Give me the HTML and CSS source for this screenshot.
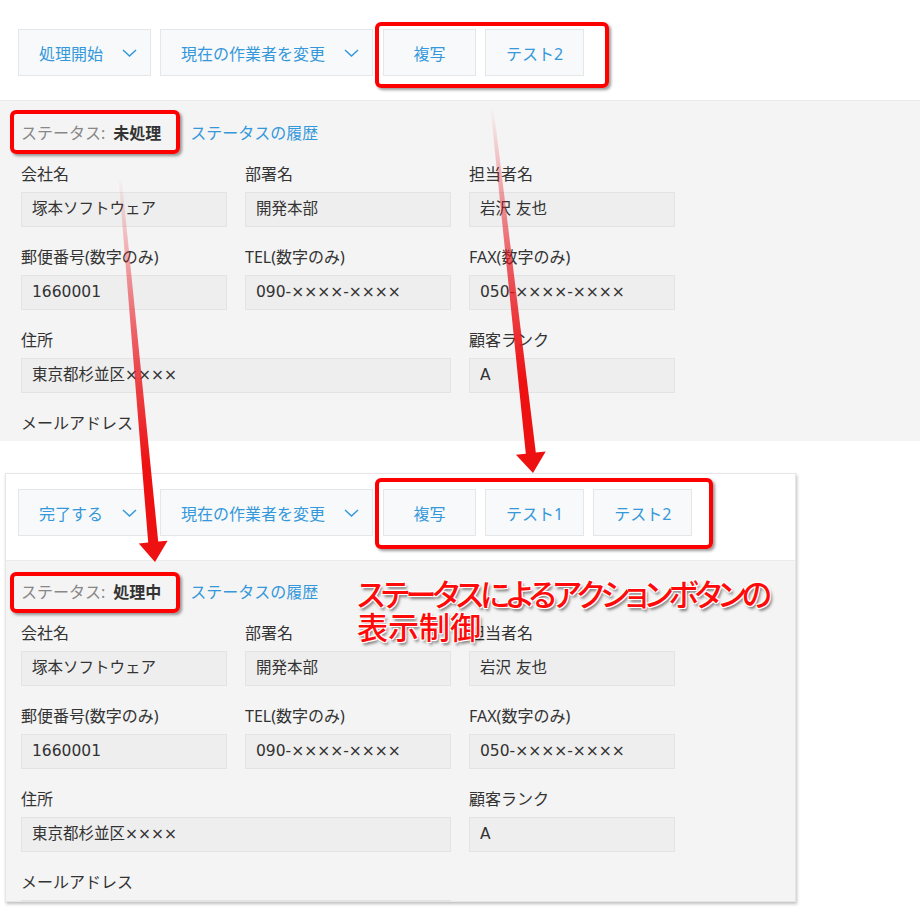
FILE: index.html
```html
<!DOCTYPE html>
<html lang="ja">
<head>
    <meta charset="UTF-8">
    <title>ステータスによるアクションボタンの表示制御</title>
    <link rel="stylesheet" href="styles.css">
</head>
<body>
    <div class="shot">
        <!-- 未処理のレコード -->
        <section class="record record-full">
            <div class="toolbar">
                <button class="btn btn-menu">処理開始 <svg class="chev" viewBox="0 0 15 8"><polyline points="1,1 7.5,7 14,1"/></svg></button>
                <button class="btn btn-menu">現在の作業者を変更 <svg class="chev" viewBox="0 0 15 8"><polyline points="1,1 7.5,7 14,1"/></svg></button>
                <button class="btn btn-action btn-first">複写</button>
                <button class="btn btn-action">テスト2</button>
            </div>
            <div class="detail">
                <div class="status-row">
                    <span class="status-label">ステータス:</span>
                    <span class="status-value">未処理</span>
                    <a class="status-link">ステータスの履歴</a>
                </div>
                <div class="fields">
                    <div class="field"><div class="label">会社名</div><div class="value">塚本ソフトウェア</div></div>
                    <div class="field"><div class="label">部署名</div><div class="value">開発本部</div></div>
                    <div class="field"><div class="label">担当者名</div><div class="value">岩沢 友也</div></div>
                    <div class="field"><div class="label">郵便番号(数字のみ)</div><div class="value">1660001</div></div>
                    <div class="field"><div class="label">TEL(数字のみ)</div><div class="value">090-××××-××××</div></div>
                    <div class="field"><div class="label">FAX(数字のみ)</div><div class="value">050-××××-××××</div></div>
                    <div class="field wide"><div class="label">住所</div><div class="value">東京都杉並区××××</div></div>
                    <div class="field"><div class="label">顧客ランク</div><div class="value">A</div></div>
                    <div class="field wide"><div class="label">メールアドレス</div><div class="value"></div></div>
                </div>
            </div>
        </section>

        <!-- 処理中のレコード -->
        <section class="record record-card">
            <div class="toolbar">
                <button class="btn btn-menu">完了する <svg class="chev" viewBox="0 0 15 8"><polyline points="1,1 7.5,7 14,1"/></svg></button>
                <button class="btn btn-menu">現在の作業者を変更 <svg class="chev" viewBox="0 0 15 8"><polyline points="1,1 7.5,7 14,1"/></svg></button>
                <button class="btn btn-action btn-first">複写</button>
                <button class="btn btn-action">テスト1</button>
                <button class="btn btn-action">テスト2</button>
            </div>
            <div class="detail">
                <div class="status-row">
                    <span class="status-label">ステータス:</span>
                    <span class="status-value">処理中</span>
                    <a class="status-link">ステータスの履歴</a>
                </div>
                <div class="fields">
                    <div class="field"><div class="label">会社名</div><div class="value">塚本ソフトウェア</div></div>
                    <div class="field"><div class="label">部署名</div><div class="value">開発本部</div></div>
                    <div class="field"><div class="label">担当者名</div><div class="value">岩沢 友也</div></div>
                    <div class="field"><div class="label">郵便番号(数字のみ)</div><div class="value">1660001</div></div>
                    <div class="field"><div class="label">TEL(数字のみ)</div><div class="value">090-××××-××××</div></div>
                    <div class="field"><div class="label">FAX(数字のみ)</div><div class="value">050-××××-××××</div></div>
                    <div class="field wide"><div class="label">住所</div><div class="value">東京都杉並区××××</div></div>
                    <div class="field"><div class="label">顧客ランク</div><div class="value">A</div></div>
                    <div class="field wide"><div class="label">メールアドレス</div><div class="value"></div></div>
                </div>
            </div>
        </section>

        <!-- 注釈 -->
        <div class="mark mark-tools-a"></div>
        <div class="mark mark-status-a"></div>
        <div class="mark mark-tools-b"></div>
        <div class="mark mark-status-b"></div>

        <svg class="arrows" viewBox="0 0 920 920">
            <defs>
                <linearGradient id="fade-a" gradientUnits="userSpaceOnUse" x1="120" y1="177" x2="155" y2="562">
                    <stop offset="0" stop-color="#e8121b" stop-opacity="0"/>
                    <stop offset="0.4" stop-color="#e8121b" stop-opacity="0.65"/>
                    <stop offset="0.75" stop-color="#ee1111" stop-opacity="1"/>
                </linearGradient>
                <linearGradient id="fade-b" gradientUnits="userSpaceOnUse" x1="492" y1="108" x2="533" y2="473">
                    <stop offset="0" stop-color="#e8121b" stop-opacity="0"/>
                    <stop offset="0.4" stop-color="#e8121b" stop-opacity="0.65"/>
                    <stop offset="0.75" stop-color="#ee1111" stop-opacity="1"/>
                </linearGradient>
            </defs>
            <polygon fill="url(#fade-a)" points="118.5,177.1 121.5,176.9 158.2,541.6 167.6,540.8 155,562 138.8,543.4 148.2,542.6"/>
            <polygon fill="url(#fade-b)" points="490.5,108.2 493.5,107.8 535.8,452.5 545.7,451.4 533,473 515.9,454.8 525.8,453.7"/>
        </svg>

        <p class="note"><span class="note-line note-kana">ステータスによるアクションボタンの</span><span class="note-line">表示制御</span></p>
    </div>
</body>
</html>
```

FILE: styles.css
```css
body {
    margin: 0;
    background-color: #fff;
    font-family: "Noto Sans", "Noto Sans CJK JP", sans-serif;
    font-size: 16px;
    color: #333;
}
.shot {
    position: relative;
    width: 920px;
    height: 920px;
    overflow: hidden;
}

/* レコード */
.record-full {
    width: 920px;
}
.record-card {
    width: 791px;
    margin: 32px 0 0 5px;
    border: 1px solid #e6e6e6;
    box-sizing: border-box;
    box-shadow: 1px 2px 3px rgba(0, 0, 0, 0.25);
}
.toolbar {
    display: flex;
    gap: 9px;
    box-sizing: border-box;
    height: 100px;
    padding: 29px 0 0 18px;
    background-color: #fff;
}
.record-card .toolbar {
    height: 86px;
    padding: 15px 0 0 12px;
}
.btn {
    display: flex;
    align-items: center;
    height: 47px;
    padding: 0 20px;
    border: 1px solid #e3e7e8;
    background-color: #f7f9fa;
    color: #3498db;
    font-family: inherit;
    font-size: 16px;
    box-sizing: border-box;
}
.btn-menu {
    padding-right: 13px;
}
.btn-action {
    justify-content: center;
    min-width: 93px;
}
.btn-first {
    margin-left: 1px;
}
.chev {
    width: 15px;
    height: 8px;
    margin-left: 19px;
    fill: none;
    stroke: #3498db;
    stroke-width: 1.5;
}

/* 詳細 */
.detail {
    height: 341px;
    overflow: hidden;
    box-sizing: border-box;
    padding: 19px 21px 0;
    background-color: #f4f4f4;
    border-top: 1px solid #ebebeb;
}
.record-card .detail {
    height: 341px;
    padding: 18px 15px 0;
}
.status-row {
    display: flex;
    align-items: center;
    height: 24px;
    margin-bottom: 18px;
}
.status-label {
    color: #888;
}
.status-value {
    margin-left: 8px;
    font-weight: bold;
    color: #333;
}
.status-link {
    margin-left: 29px;
    color: #3498db;
}
.fields {
    display: grid;
    grid-template-columns: repeat(3, 206px);
    column-gap: 18px;
    row-gap: 18px;
}
.field.wide {
    grid-column: span 2;
}
.label {
    height: 24px;
    line-height: 24px;
    margin-bottom: 6px;
    color: #333;
}
.value {
    height: 35px;
    line-height: 33px;
    padding-left: 10px;
    box-sizing: border-box;
    border: 1px solid #e3e3e3;
    background-color: #eee;
    color: #333;
    font-family: "DejaVu Sans", "Noto Sans CJK JP", sans-serif;
    font-size: 15.5px;
}

/* 赤枠と矢印 */
.mark {
    position: absolute;
    box-sizing: border-box;
    border: 4px solid #f00;
    border-radius: 6px;
    box-shadow: 2px 2px 3px rgba(0, 0, 0, 0.4);
}
.mark-tools-a {
    left: 375px;
    top: 22px;
    width: 234px;
    height: 66px;
}
.mark-status-a {
    left: 10px;
    top: 110px;
    width: 170px;
    height: 44px;
}
.mark-tools-b {
    left: 375px;
    top: 478px;
    width: 338px;
    height: 71px;
}
.mark-status-b {
    left: 10px;
    top: 572px;
    width: 170px;
    height: 41px;
}
.arrows {
    position: absolute;
    left: 0;
    top: 0;
    width: 920px;
    height: 920px;
}
.note {
    position: absolute;
    left: 357px;
    top: 576px;
    margin: 0;
    font-family: "Noto Sans CJK JP", sans-serif;
    font-size: 31px;
    line-height: 33px;
    font-weight: 500;
    font-feature-settings: "palt";
    color: #ff0a0a;
    text-shadow: -1px -1px 0 #fff, 1px -1px 0 #fff, -1px 1px 0 #fff, 1px 1px 0 #fff, 2px 3px 3px rgba(0, 0, 0, 0.5);
}
.note-line {
    display: block;
}
.note-kana {
    letter-spacing: -3.7px;
}
```
